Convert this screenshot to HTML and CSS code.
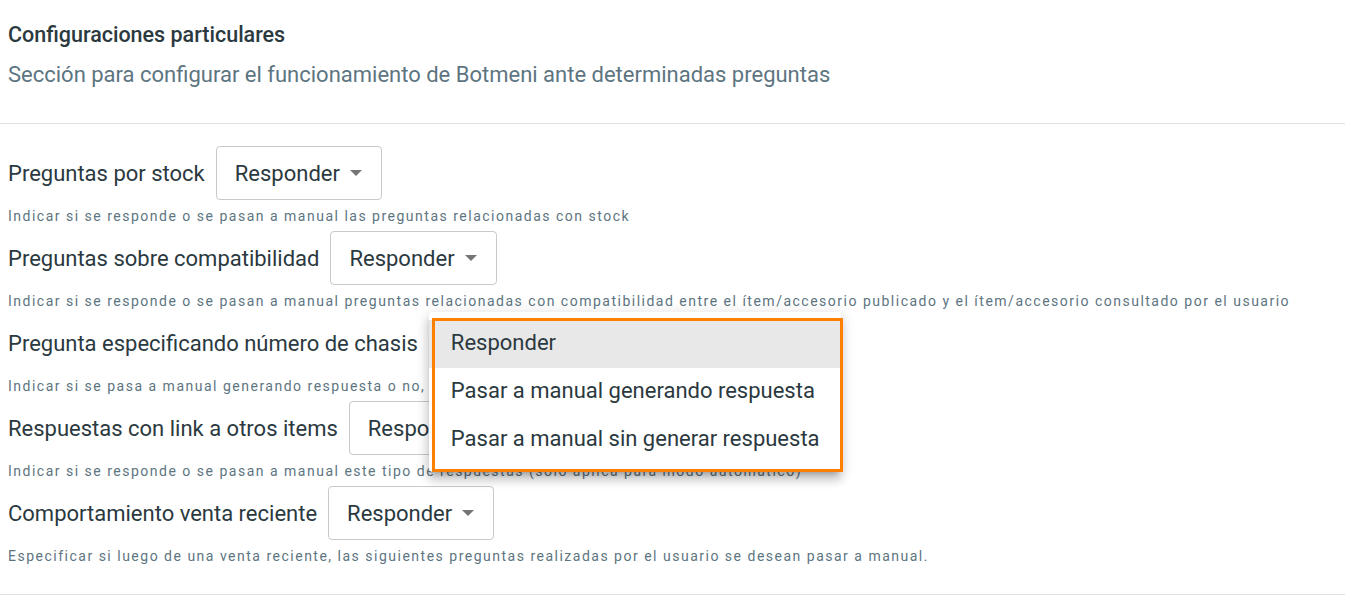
FILE: index.html
```html
<!DOCTYPE html>
<html lang="es">
<head>
<meta charset="utf-8">
<title>Configuraciones particulares</title>
<link rel="stylesheet" href="styles.css">
</head>
<body>
<div class="page">
  <header class="head">
    <h2 class="title">Configuraciones particulares</h2>
    <p class="subtitle">Sección para configurar el funcionamiento de Botmeni ante determinadas preguntas</p>
  </header>
  <hr class="divider">
  <section class="settings">
    <div class="setting">
      <div class="row">
        <span class="label">Preguntas por stock</span>
        <div class="select"><span class="value">Responder</span><span class="caret"></span></div>
      </div>
      <p class="hint">Indicar si se responde o se pasan a manual las preguntas relacionadas con stock</p>
    </div>
    <div class="setting">
      <div class="row">
        <span class="label">Preguntas sobre compatibilidad</span>
        <div class="select"><span class="value">Responder</span><span class="caret"></span></div>
      </div>
      <p class="hint">Indicar si se responde o se pasan a manual preguntas relacionadas con compatibilidad entre el ítem/accesorio publicado y el ítem/accesorio consultado por el usuario</p>
    </div>
    <div class="setting">
      <div class="row">
        <span class="label">Pregunta especificando número de chasis</span>
        <div class="select-wrap">
          <div class="select"><span class="value">Responder</span><span class="caret"></span></div>
          <div class="menu">
            <div class="item active">Responder</div>
            <div class="item">Pasar a manual generando respuesta</div>
            <div class="item">Pasar a manual sin generar respuesta</div>
            <div class="highlight"></div>
          </div>
        </div>
      </div>
      <p class="hint">Indicar si se pasa a manual generando respuesta o no, en preguntas con número de chasis</p>
    </div>
    <div class="setting">
      <div class="row">
        <span class="label">Respuestas con link a otros items</span>
        <div class="select"><span class="value">Responder</span><span class="caret"></span></div>
      </div>
      <p class="hint">Indicar si se responde o se pasan a manual este tipo de respuestas (solo aplica para modo automático)</p>
    </div>
    <div class="setting">
      <div class="row">
        <span class="label">Comportamiento venta reciente</span>
        <div class="select"><span class="value">Responder</span><span class="caret"></span></div>
      </div>
      <p class="hint">Especificar si luego de una venta reciente, las siguientes preguntas realizadas por el usuario se desean pasar a manual.</p>
    </div>
  </section>
  <hr class="divider bottom">
</div>
</body>
</html>
```
FILE: styles.css
```css
html, body {
  margin: 0;
  padding: 0;
  background: #ffffff;
}
body {
  font-family: Roboto, "Liberation Sans", Arial, sans-serif;
  color: #2b3940;
  overflow: hidden;
}
.page {
  width: 1345px;
}
.head {
  padding: 21px 8px 0 8px;
}
.title {
  margin: 0;
  font-size: 21.5px;
  line-height: 28px;
  font-weight: 500;
  color: #2b3940;
}
.subtitle {
  margin: 12px 0 0 0;
  font-size: 22px;
  line-height: 28px;
  color: #5d7581;
}
.divider {
  margin: 34px 0 0 0;
  border: 0;
  border-top: 1px solid #e0e0e0;
  height: 0;
}
.divider.bottom {
  margin-top: 28px;
}
.settings {
  padding: 22px 8px 0 8px;
}
.setting + .setting {
  margin-top: 5px;
}
.row {
  display: flex;
  align-items: center;
  height: 54px;
}
.label {
  font-size: 22px;
  color: #2b3940;
  margin-right: 11px;
}
.select-wrap {
  position: relative;
}
.select {
  display: flex;
  align-items: center;
  box-sizing: border-box;
  height: 54px;
  padding: 0 19px 0 18px;
  border: 1px solid #c9c9c9;
  border-radius: 4px;
  background: #fff;
}
.value {
  font-size: 22px;
  color: #2b3940;
}
.caret {
  width: 0;
  height: 0;
  margin-left: 10px;
  border-left: 6.5px solid transparent;
  border-right: 6.5px solid transparent;
  border-top: 6px solid #757575;
}
.hint {
  margin: 6px 0 0 0;
  font-size: 14px;
  line-height: 20px;
  letter-spacing: 1.5px;
  color: #5d7581;
}
.menu {
  position: absolute;
  left: 0;
  top: -4px;
  width: 412px;
  padding: 8px 0;
  background: #fff;
  border-radius: 4px;
  box-shadow: 0 5px 5px -3px rgba(0,0,0,.2), 0 8px 10px 1px rgba(0,0,0,.14), 0 3px 14px 2px rgba(0,0,0,.12);
  z-index: 5;
}
.item {
  height: 48px;
  display: flex;
  align-items: center;
  padding-left: 22px;
  padding-bottom: 3px;
  box-sizing: border-box;
  font-size: 22px;
  color: #2b3940;
}
.item.active {
  background: #e8e8e8;
}
.highlight {
  position: absolute;
  left: 3px;
  top: 6px;
  width: 411px;
  height: 154px;
  box-sizing: border-box;
  border: 3px solid #ff8000;
  pointer-events: none;
}
```
